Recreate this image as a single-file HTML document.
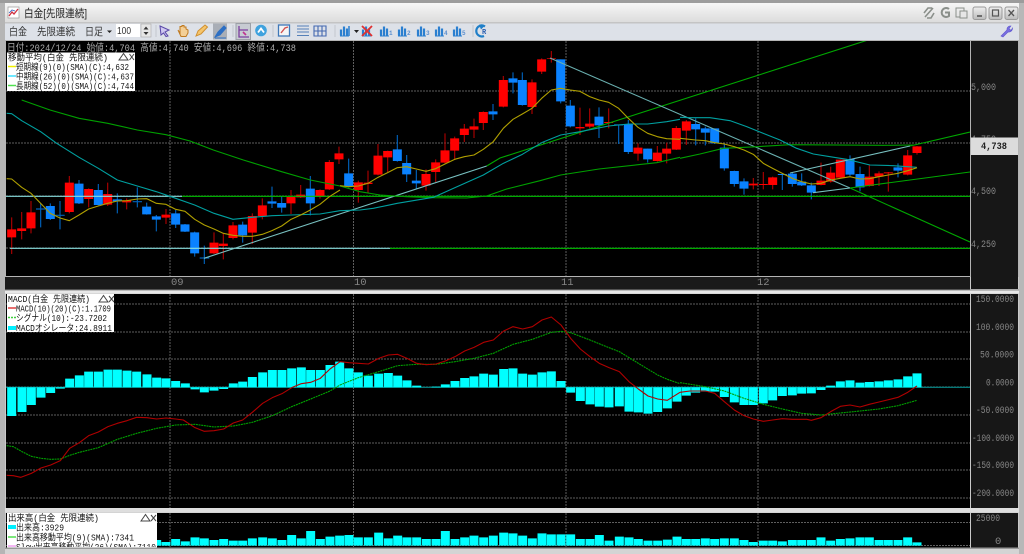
<!DOCTYPE html>
<html lang="ja"><head><meta charset="utf-8"><title>白金[先限連続]</title>
<style>
html,body{margin:0;padding:0;background:#c8c8c8;width:1024px;height:554px;overflow:hidden}
svg{display:block;position:absolute;left:0;top:0;filter:blur(.35px)}
text{font-family:"Liberation Mono","Noto Sans CJK JP",monospace}
.u{font-family:"Liberation Sans","Noto Sans CJK JP",sans-serif}
.k{font-size:9px;fill:#111}
.ax{font-size:10.5px;fill:#858585}
.m{fill:none;stroke-width:3.3;stroke-linejoin:round}
</style></head><body>
<svg width="1024" height="554" viewBox="0 0 1024 554" xmlns="http://www.w3.org/2000/svg">
<defs>
<linearGradient id="tb" x1="0" y1="0" x2="0" y2="1"><stop offset="0" stop-color="#f6f6f6"/><stop offset="1" stop-color="#dcdcdc"/></linearGradient>
<linearGradient id="wb" x1="0" y1="0" x2="0" y2="1"><stop offset="0" stop-color="#eee"/><stop offset="1" stop-color="#bbb"/></linearGradient>
<clipPath id="c1"><rect x="6" y="41" width="964" height="235"/></clipPath>
<clipPath id="c2"><rect x="6" y="294" width="964" height="214"/></clipPath>
<clipPath id="c3"><rect x="6" y="513" width="964" height="34"/></clipPath>
<clipPath id="c4"><rect x="7" y="513" width="150" height="34"/></clipPath>
<g id="bars"><path d="M1 10V4M4 10V1M7 10V3" stroke="#2a7fd0" stroke-width="2.2" fill="none"/><path d="M0 10.5H9" stroke="#2a7fd0" stroke-width="1"/></g>
</defs>

<!-- window chrome -->
<rect width="1024" height="554" fill="#c9c9c9"/>
<rect width="1024" height="3" fill="#9c9c9c"/>
<rect x="5" y="3" width="1015" height="19" fill="url(#tb)"/>
<rect x="5" y="22" width="1015" height="1.5" fill="#c4c4c4"/>
<rect x="5" y="23.5" width="1014" height="17" fill="#dde1e8"/>
<rect x="0" y="3" width="5" height="551" fill="#b5b5b5"/>
<rect x="1019" y="3" width="5" height="551" fill="#b8b8b8"/>

<!-- title -->
<rect x="8" y="7" width="11" height="11" fill="#fff" stroke="#999" stroke-width=".7"/>
<path d="M9 16L12 12L14 14L18 9" stroke="#d03040" stroke-width="1.3" fill="none"/><path d="M9 13L12 10L15 11" stroke="#3060c0" stroke-width=".8" fill="none"/>
<text x="24" y="17" class="u" font-size="11" fill="#222" textLength="63" lengthAdjust="spacingAndGlyphs">白金[先限連続]</text>

<!-- title right icons -->
<g stroke="#8a8f8a" fill="none" stroke-width="1.6">
<path d="M925 17L933 8M924 13L928 8L932 8M927 18L931 18L934 13"/>
<path d="M949 9A4.5 4.5 0 1 0 949 16V12.5H945" stroke-width="2"/>
<rect x="956" y="8" width="8" height="9" stroke-width="1"/><rect x="960" y="11" width="7" height="7" stroke-width="1" fill="#e6e6e6"/>
</g>
<g stroke="#9a9a9a" fill="url(#wb)"><rect x="973" y="7" width="13" height="12.5" rx="2"/><rect x="989" y="7" width="13" height="12.5" rx="2"/><rect x="1005" y="7" width="13" height="12.5" rx="2"/></g>
<path d="M977 16H982" stroke="#555" stroke-width="1.6"/><rect x="992.5" y="10" width="6" height="6" fill="none" stroke="#555" stroke-width="1.2"/><path d="M1008.5 10L1014 16M1014 10L1008.5 16" stroke="#555" stroke-width="1.3"/>

<!-- toolbar -->
<g class="u" font-size="10.5" fill="#333">
<text x="9" y="35" class="u" textLength="18" lengthAdjust="spacingAndGlyphs">白金</text>
<text x="37" y="35" class="u" textLength="38" lengthAdjust="spacingAndGlyphs">先限連続</text>
<text x="85" y="35" class="u" textLength="18" lengthAdjust="spacingAndGlyphs">日足</text>
</g>
<path d="M107 30.5H112L109.5 33Z" fill="#222"/>
<rect x="116" y="24" width="24" height="13" fill="#fff"/>
<text x="117" y="34" class="u" font-size="10" fill="#333" textLength="14" lengthAdjust="spacingAndGlyphs">100</text>
<rect x="141" y="24" width="10" height="13" fill="#e6e6e6" stroke="#aaa" stroke-width=".6"/>
<path d="M143.5 29.5L146 26.5L148.500 29.5ZM143.5 32L146 35L148.5 32Z" fill="#333"/>
<path d="M156 25V37M233 25V37M273 25V37M335 25V37M473 25V37" stroke="#c3c7ce"/>
<path d="M160 26L169 30L165 32L168 36L166 36.500L163.500 33L161 35Z" fill="#cfc8f0" stroke="#5a48a8"/>
<path d="M178 30L180 33V26.500H182V25.500H184V27H186V29L188 30V33L186 36.500H181Z" fill="#f3cf96" stroke="#c07a20"/>
<path d="M196 36L198 31L205 25L207.500 27L201 34Z" fill="#f5c56c" stroke="#cf8f30"/>
<rect x="213" y="23.500" width="14" height="16" fill="#a9aeb6"/>
<path d="M215 37L218 32L224 26L226 28L220 35ZM215 38H226" fill="#2c6fc4" stroke="#2c6fc4"/>
<rect x="236" y="23.500" width="14.500" height="16" fill="#c7cbd2" stroke="#9ca0a8"/>
<path d="M239 26V37H249M239 30H248" stroke="#7b3e9e" fill="none" stroke-width="1.300"/><path d="M243 32L246 35" stroke="#c03090" stroke-width="1.600"/>
<circle cx="261" cy="30.500" r="5.800" fill="#3fa2de"/><path d="M258 32.500L261 28.500L264 32.500" stroke="#fff" stroke-width="1.800" fill="none"/>
<rect x="278.500" y="25" width="11" height="11" fill="#f5f5f5" stroke="#3f78b8" stroke-width="1.300"/><path d="M281 33L285 28L288 27" stroke="#d05050" stroke-width="1.400" fill="none"/>
<path d="M297 26H309M297 29H309M297 32H309M297 35.500H309" stroke="#5580b8" stroke-width="1.100"/>
<path d="M314 26H326V36H314ZM314 31H326M318 26V36M322 26V36" stroke="#4468b0" stroke-width="1.100" fill="none"/>
<use href="#bars" x="340" y="25.500"/><path d="M349 26V36" stroke="#2a7fd0" stroke-width="1.500"/><path d="M354 30H359L356.500 33Z" fill="#222"/>
<use href="#bars" x="362" y="25.500"/><path d="M362 26L372 36M372 26L362 36" stroke="#e03030" stroke-width="1.800"/>
<use href="#bars" x="380" y="25.500"/><use href="#bars" x="398" y="25.500"/><use href="#bars" x="417" y="25.500"/><use href="#bars" x="435" y="25.500"/><use href="#bars" x="453" y="25.500"/>
<g font-size="6" font-weight="bold" fill="#5a8fd0"><text x="389" y="35">1</text><text x="407" y="35">2</text><text x="426" y="35">3</text><text x="444" y="35">4</text><text x="462" y="35">5</text></g>
<path d="M485 26.500A5.500 5.500 0 1 0 484 36" stroke="#1f7fc8" stroke-width="2.200" fill="none"/><path d="M479 24.500L484 26.500L481 29.500" fill="#1f7fc8"/><text x="482" y="34" font-size="7" font-weight="bold" fill="#2a5fb0">R</text>
<path d="M1001 36L1007 30A3.500 3.500 0 0 1 1011 26L1009 28.500L1011 30.500L1012.500 28A3.800 3.800 0 0 1 1008 32L1003 37Z" fill="#7a70e0" stroke="#5f55d0" stroke-width=".6"/>

<!-- panels -->
<rect x="5" y="40" width="1014" height="237" fill="#b4b4b4"/>
<rect x="6" y="41" width="964" height="235" fill="#000"/>
<rect x="971" y="41" width="47" height="248" fill="#171717"/>
<rect x="5" y="277" width="965" height="12.500" fill="#1a1a1a"/>
<rect x="5" y="289.500" width="1014" height="1" fill="#8a8a8a"/>
<rect x="5" y="290.500" width="1014" height="3" fill="#e8e8e8"/>
<rect x="6" y="294" width="964" height="214" fill="#000"/>
<rect x="971" y="294" width="47" height="214" fill="#171717"/>
<rect x="5" y="508" width="1014" height="4.500" fill="#dedede"/>
<rect x="6" y="513" width="964" height="34.500" fill="#000"/>
<rect x="971" y="513" width="47" height="34.500" fill="#171717"/>
<rect x="5" y="547.500" width="1014" height="1.500" fill="#9a9a9a"/>
<rect x="5" y="549" width="1014" height="5" fill="#d4d4d4"/>

<!-- grids -->
<g stroke="#5e5e5e" stroke-width="1" stroke-dasharray="2 1" fill="none">
<path d="M6 91H970M6 143H970M6 196H970M6 248H970"/>
<path d="M6 304H970M6 332H970M6 359H970M6 415H970M6 443H970M6 470H970M6 498H970M6 387H970"/>
<path d="M6 522.500H970M6 545.500H970"/>
<path d="M170 41V276M353.500 41V276M566 41V276M758 41V276M170 294V508M353.500 294V508M566 294V508M758 294V508M170 513V547M353.500 513V547M566 513V547M758 513V547"/>
</g>

<!-- time labels -->
<text x="171" y="285" class="ax">09</text><text x="354" y="285" class="ax">10</text><text x="561" y="285" class="ax">11</text><text x="757" y="285" class="ax">12</text>

<!-- price panel -->
<g clip-path="url(#c1)">
<g transform="translate(0,100) scale(.33333)">
<path fill="none" stroke="#a80000" stroke-width="3.500" d="M35 352V462M65 336V418M93 303V400M208 228V340M266 265V322M323 248V318M380 295V328M498 327V372M642 397V462M670 400V478M699 366V418M757 340V432M787 295V358M873 270V342M902 255V294M960 268V296M988 180V270M1017 140V192"/>
<path fill="none" stroke="#0060b8" stroke-width="3.500" d="M122 310V382M151 310V360M180 303V388M237 240V312M295 252V316M352 280V340M412 262V322M440 308V344M469 345V394M527 330V384M555 372V396M584 395V470M613 437V492M728 365V428M816 260V324M845 290V338M931 228V346M108 327H137M165 346H194M338 301H366M398 305H426M599 474H628"/>
<path fill="none" stroke="#ff0000" stroke-width="27" d="M35 388V412M65 385V393M93 337V385M208 248V336M266 267V297M323 282V314M380 301V307M498 344V353M642 428V460M670 431V438M699 376V414M757 348V398M787 316V348M873 291V310M902 284V292M960 270V290M988 186V268M1017 160V178"/>
<path fill="none" stroke="#0a82ff" stroke-width="27" d="M151 318V357M237 251V310M295 270V315M352 298V304M440 320V343M469 349V359M527 340V374M555 373V395M584 397V460M728 374V406M816 304V311M845 309V323M931 266V310"/>
</g>
<g transform="translate(340,40) scale(.33333)">
<path fill="none" stroke="#a80000" stroke-width="3.500" d="M55 422V488M84 392V460M114 312V406M143 332V396M258 388V452M287 358V426M315 280V370M344 290V360M373 252V306M402 236V294M430 214V270M490 108V202M576 118V222M605 55V102M634 33V68M720 203V285M749 205V265M806 205V265M894 310V362M952 318V365M980 308V370M1009 258V330"/>
<path fill="none" stroke="#0060b8" stroke-width="3.500" d="M26 356V442M172 285V365M200 345V426M229 390V446M459 192V240M519 97V160M547 97V197M662 58V190M691 180V262M777 202V294M836 254V312M865 240V342M923 326V368"/>
<path fill="none" stroke="#ff0000" stroke-width="27" d="M55 427V450M84 428V432M114 347V404M143 333V352M258 402V437M287 367V396M315 331V368M344 295V332M373 266V285M402 259V269M430 216V249M490 120V200M576 127V201M605 58V95M634 55V57M720 261V265M749 251V260M806 246V249M894 323V341M952 338V363M980 326V341M1009 264V329"/>
<path fill="none" stroke="#0a82ff" stroke-width="27" d="M26 400V440M172 328V363M200 369V403M229 422V430M459 214V223M519 115V128M547 120V195M662 58V184M691 197V259M777 230V256M836 253V256M865 252V336M923 326V358"/>
</g>
<g transform="translate(680,0) scale(.33333)">
<path fill="none" stroke="#a80000" stroke-width="3.500" d="M19 360V435M220 534V568M250 516V568M278 530V568M423 488V556M452 500V548M481 478V534M568 495V560M597 514V558M625 516V575M683 450V526M711 438V464"/>
<path fill="none" stroke="#0060b8" stroke-width="3.500" d="M47 355V436M76 380V436M104 385V432M133 432V512M163 512V560M192 535V584M307 520V570M337 516V560M365 520V558M394 548V598M510 466V528M540 500V574M654 490V532"/>
<path fill="none" stroke="#ff0000" stroke-width="27" d="M19 364V392M220 551V556M250 552V555M278 532V555M423 542V555M452 518V545M481 479V533M568 530V558M597 520V530M625 517V520M683 466V524M711 439V459"/>
<path fill="none" stroke="#0a82ff" stroke-width="27" d="M47 372V388M76 385V398M104 385V430M133 443V505M163 513V552M192 544V566M307 522V525M337 521V552M365 545V556M394 556V578M510 477V524M540 522V562M654 502V512"/>
</g>

<!-- horizontal + trend lines -->
<g fill="none" stroke-width="1.100">
<path d="M182 196.300H970M390 248.300H970" stroke="#00c000"/>
<path d="M6 196.300H182M10 248.300H390" stroke="#88dede"/>
<path d="M486.700 166L500 158L868 40" stroke="#00a800"/>
<path d="M204 258.300L486.700 166" stroke="#78c0c0"/>
<path d="M550 58L850 188" stroke="#6ab0b0"/>
<path d="M850 188L970 242" stroke="#00a800"/>
<path d="M813 192.700L850 188" stroke="#78c0c0"/>
<path d="M850 188L970 172" stroke="#00a800"/>
<path d="M790 173L910 146" stroke="#78c0c0"/>
<path d="M910 146L970 132" stroke="#00a800"/>
</g>

<!-- moving averages -->
<g transform="translate(0,100) scale(.33333)">
<polyline class="m" stroke="#00a000" points="65,0 150,30 237,55 323,70 412,90 498,104 570,123 640,150 730,180 845,215 931,240 1020,258"/>
<polyline class="m" stroke="#00a0a0" points="20,40 35,41 65,62 122,95 170,130 237,172 295,205 352,240 412,258 469,275 527,295 584,315 642,340 699,358 757,352 816,347 873,345 960,342 1020,332"/>
<polyline class="m" stroke="#b0a000" points="20,236 35,237 65,262 93,280 122,310 151,340 180,354 208,362 237,345 266,327 295,318 323,310 352,303 380,302 412,297 440,296 469,310 498,313 527,328 555,334 584,358 613,375 642,387 670,400 699,406 728,409 757,409 787,403 816,392 845,378 873,358 902,345 931,330 960,313 988,290 1020,270"/>
</g>
<g transform="translate(340,40) scale(.33333)">
<polyline class="m" stroke="#00a000" points="0,438 60,455 120,465 200,470 280,473 380,474 440,468 500,447 600,422 662,405 777,387 950,368 1020,352"/>
<polyline class="m" stroke="#00a0a0" points="0,512 60,510 100,505 172,490 280,472 340,445 430,405 490,370 547,343 605,308 662,285 720,275 806,258 865,252 923,252 980,245 1020,238"/>
<polyline class="m" stroke="#b0a000" points="0,437 26,440 55,438 84,430 114,412 143,398 172,383 200,380 229,387 258,394 287,386 315,372 344,358 373,350 402,345 430,328 459,306 490,265 519,238 547,222 576,205 605,175 634,150 662,145 691,150 720,154 749,170 777,180 806,187 836,205 865,235 894,262 923,280 952,290 980,296 1020,298"/>
</g>
<g transform="translate(680,0) scale(.33333)">
<polyline class="m" stroke="#00a000" points="0,475 60,462 130,445 232,440 330,434 610,436 700,435"/>
<polyline class="m" stroke="#00a0a0" points="0,352 30,353 90,353 150,362 200,380 250,400 300,420 350,445 400,462 450,470 500,478 570,495 640,497 710,502"/>
<polyline class="m" stroke="#b0a000" points="0,415 47,420 76,422 104,428 133,432 163,440 192,450 220,463 250,490 278,505 307,520 337,535 365,545 394,552 423,550 452,540 481,535 510,530 540,537 568,536 597,530 625,525 654,520 683,512 711,503"/>
</g>
</g>

<!-- header + legend 1 -->
<text x="7" y="51" font-size="10" fill="#aaa" textLength="289" lengthAdjust="spacingAndGlyphs">日付:2024/12/24 始値:4,704 高値:4,740 安値:4,696 終値:4,738</text>
<rect x="7" y="52.500" width="128" height="38.500" fill="#fff"/>
<text x="8" y="60.500" class="k" textLength="100" lengthAdjust="spacingAndGlyphs">移動平均(白金 先限連続)</text>
<path d="M119 60L123.500 53.500L128 60Z" fill="none" stroke="#444"/><path d="M129.500 54L134 60M134 54L129.500 60" stroke="#444"/>
<path d="M8 66.500H16" stroke="#f0f000" stroke-width="1.500"/><path d="M8 76H16" stroke="#40e0ff" stroke-width="1.500"/><path d="M8 85.500H16" stroke="#50e050" stroke-width="1.500"/>
<text x="16" y="70" class="k" textLength="113" lengthAdjust="spacingAndGlyphs">短期線(9)(0)(SMA)(C):4,632</text>
<text x="16" y="79.500" class="k" textLength="118" lengthAdjust="spacingAndGlyphs">中期線(26)(0)(SMA)(C):4,637</text>
<text x="16" y="89" class="k" textLength="118" lengthAdjust="spacingAndGlyphs">長期線(52)(0)(SMA)(C):4,744</text>

<!-- price axis -->
<text x="971" y="90" class="ax" textLength="25" lengthAdjust="spacingAndGlyphs">5,000</text>
<text x="971" y="142" class="ax" textLength="25" lengthAdjust="spacingAndGlyphs">4,750</text>
<text x="971" y="194" class="ax" textLength="25" lengthAdjust="spacingAndGlyphs">4,500</text>
<text x="971" y="247" class="ax" textLength="25" lengthAdjust="spacingAndGlyphs">4,250</text>
<rect x="971" y="137.500" width="47" height="17.500" fill="#dcdcdc"/>
<text x="981" y="149" font-size="10.500" font-weight="bold" fill="#222" textLength="26" lengthAdjust="spacingAndGlyphs">4,738</text>

<!-- MACD -->
<g clip-path="url(#c2)">
<path d="M6 387.300H970" stroke="#08a0a0" stroke-width="1"/>
<g fill="none" stroke-width="27" stroke="#00ffff">
<path transform="translate(0,285) scale(.33333)" d="M35 307V393M66 307V381M94 307V360M123 307V338M152 307V324M181 307V311M209 307V281M238 307V271M266 307V260M295 307V260M324 307V254M352 307V254M381 307V257M410 307V260M441 307V268M470 307V278M498 307V280M527 307V288M556 307V295M585 307V313M613 307V322M642 307V317M671 307V312M700 307V295M728 307V290M757 307V276M788 307V262M817 307V255M846 307V255M875 307V250M904 307V247M932 307V255M961 307V255M990 307V240M1019 307V230"/>
<path transform="translate(340,285) scale(.33333)" d="M27 307V250M55 307V262M85 307V272M116 307V266M145 307V264M173 307V272M201 307V286M230 307V302M288 307V305M316 307V298M345 307V288M374 307V279M402 307V274M431 307V266M460 307V269M491 307V252M519 307V250M548 307V266M577 307V269M606 307V262M634 307V259M663 307V288M692 307V323M721 307V348M750 307V358M778 307V365M807 307V367M838 307V364M867 307V380M895 307V382M924 307V386M953 307V381M982 307V370M1011 307V350"/>
<path transform="translate(680,285) scale(.33333)" d="M19 307V332M47 307V323M76 307V320M104 307V320M133 307V336M163 307V352M192 307V360M220 307V360M250 307V355M278 307V346M307 307V333M337 307V331M365 307V326M394 307V325M423 307V315M452 307V302M481 307V289M510 307V286M540 307V293M568 307V291M597 307V289M625 307V286M654 307V283M683 307V274M711 307V265"/>
</g>
<g transform="translate(0,285) scale(.33333)">
<polyline class="m" stroke="#00a000" stroke-dasharray="6 2" points="20,482 40,485 66,500 94,514 123,520 152,523 181,522 209,511 238,502 295,488 352,463 410,445 470,430 527,420 585,418 642,426 700,423 757,412 817,392 875,365 932,342 990,318 1020,300"/>
<polyline class="m" stroke="#b00000" points="20,571 40,572 62,577 94,565 123,549 152,540 181,527 209,490 238,473 266,452 295,441 324,425 352,415 381,407 410,397 441,398 470,402 498,399 527,402 550,405 585,428 613,439 642,437 671,432 700,414 728,405 757,382 788,355 817,338 846,326 875,308 904,296 932,292 961,280 990,252 1020,230"/>
</g>
<g transform="translate(340,285) scale(.33333)">
<polyline class="m" stroke="#00a000" stroke-dasharray="6 2" points="0,300 55,278 116,260 173,242 230,238 288,238 345,230 402,220 460,205 519,178 577,163 634,142 663,139 692,143 750,165 807,188 838,200 895,235 953,270 982,283 1020,296"/>
<polyline class="m" stroke="#b00000" points="0,230 27,233 55,235 85,237 116,220 145,210 173,208 201,220 230,235 259,239 288,237 316,228 345,215 374,198 402,187 431,172 460,165 491,138 519,125 548,132 577,125 606,105 634,96 663,120 692,160 721,192 750,215 778,235 807,248 838,260 867,290 895,312 924,333 953,342 982,346 1020,322"/>
</g>
<g transform="translate(680,285) scale(.33333)">
<polyline class="m" stroke="#00a000" stroke-dasharray="6 2" points="0,293 76,305 133,318 192,340 250,358 307,372 365,385 423,390 481,384 540,378 597,372 654,362 711,346"/>
<polyline class="m" stroke="#b00000" points="0,322 30,318 76,318 104,325 133,350 163,375 192,392 220,402 250,409 278,405 307,401 337,403 380,403 394,406 423,398 452,380 481,364 510,360 540,366 568,358 597,351 654,337 683,322 711,303"/>
</g>
</g>

<!-- legend 2 -->
<rect x="7" y="294" width="107" height="38" fill="#fff"/>
<text x="8" y="302" class="k" textLength="82" lengthAdjust="spacingAndGlyphs">MACD(白金 先限連続)</text>
<path d="M99 302L103.500 295.500L108 302Z" fill="none" stroke="#444"/><path d="M109 296L114 302M114 296L109 302" stroke="#444"/>
<path d="M8 308H16" stroke="#e04040" stroke-width="1.500"/><path d="M8 317.500H16" stroke="#40d040" stroke-dasharray="2 1" stroke-width="1.500"/><rect x="8" y="326" width="8" height="4" fill="#00f0ff"/>
<text x="16" y="311.500" class="k" textLength="95" lengthAdjust="spacingAndGlyphs">MACD(10)(20)(C):1.1709</text>
<text x="16" y="321" class="k" textLength="91" lengthAdjust="spacingAndGlyphs">シグナル(10):-23.7202</text>
<text x="16" y="331" class="k" textLength="96" lengthAdjust="spacingAndGlyphs">MACDオシレータ:24.8911</text>

<!-- MACD axis -->
<g class="ax">
<text x="976" y="302" textLength="38" lengthAdjust="spacingAndGlyphs">150.0000</text>
<text x="976" y="330" textLength="38" lengthAdjust="spacingAndGlyphs">100.0000</text>
<text x="980" y="357.500" textLength="34" lengthAdjust="spacingAndGlyphs">50.0000</text>
<text x="986" y="385.500" textLength="28" lengthAdjust="spacingAndGlyphs">0.0000</text>
<text x="976" y="413" textLength="38" lengthAdjust="spacingAndGlyphs">-50.0000</text>
<text x="972" y="441" textLength="42" lengthAdjust="spacingAndGlyphs">-100.0000</text>
<text x="972" y="468" textLength="42" lengthAdjust="spacingAndGlyphs">-150.0000</text>
<text x="972" y="496" textLength="42" lengthAdjust="spacingAndGlyphs">-200.0000</text>
</g>

<!-- Volume -->
<g clip-path="url(#c3)">
<g fill="none" stroke="#00ffff" stroke-width="27">
<path transform="translate(0,285) scale(.33333)" d="M470 782V765M498 782V771M527 782V762M556 782V769M585 782V757M613 782V760M642 782V765M671 782V762M700 782V767M728 782V767M757 782V760M788 782V757M817 782V760M846 782V765M875 782V750M904 782V760M932 782V738M961 782V762M990 782V755M1019 782V752"/>
<path transform="translate(340,285) scale(.33333)" d="M27 782V750M55 782V757M85 782V757M116 782V743M145 782V760M173 782V752M201 782V757M230 782V757M259 782V762M288 782V762M316 782V738M345 782V762M374 782V757M402 782V752M431 782V757M460 782V752M491 782V743M519 782V745M548 782V752M577 782V760M606 782V745M634 782V748M663 782V748M692 782V748M721 782V762M750 782V762M778 782V750M807 782V767M838 782V755M867 782V757M895 782V762M924 782V767M953 782V767M982 782V764M1011 782V755"/>
<path transform="translate(680,285) scale(.33333)" d="M19 782V762M47 782V762M76 782V760M104 782V762M133 782V760M163 782V760M192 782V765M220 782V771M250 782V767M278 782V767M307 782V769M337 782V765M365 782V765M394 782V765M423 782V757M452 782V767M481 782V762M510 782V760M540 782V757M568 782V757M597 782V765M625 782V765M654 782V765M683 782V757M711 782V772"/>
</g>
</g>

<!-- legend 3 -->
<rect x="7" y="513" width="150" height="34.500" fill="#fff"/>
<g clip-path="url(#c4)">
<text x="8" y="521" class="k" textLength="91" lengthAdjust="spacingAndGlyphs">出来高(白金 先限連続)</text>
<path d="M141 521L145.500 514.500L150 521Z" fill="none" stroke="#444"/><path d="M151 515L156 521M156 515L151 521" stroke="#444"/>
<rect x="8" y="525" width="8" height="4" fill="#00f0ff"/><path d="M8 537H16" stroke="#50e050" stroke-width="1.500"/><path d="M8 546H16" stroke="#f0a0f0" stroke-width="1.500"/>
<text x="16" y="530.500" class="k" textLength="48" lengthAdjust="spacingAndGlyphs">出来高:3929</text>
<text x="16" y="540.500" class="k" textLength="118" lengthAdjust="spacingAndGlyphs">出来高移動平均(9)(SMA):7341</text>
<text x="16" y="550" class="k" textLength="140" lengthAdjust="spacingAndGlyphs">Slow出来高移動平均(26)(SMA):7110</text>
</g>

<!-- volume axis -->
<text x="976" y="521" class="ax" textLength="24" lengthAdjust="spacingAndGlyphs">25000</text>
<text x="995" y="544" class="ax">0</text>
</svg>
</body></html>
